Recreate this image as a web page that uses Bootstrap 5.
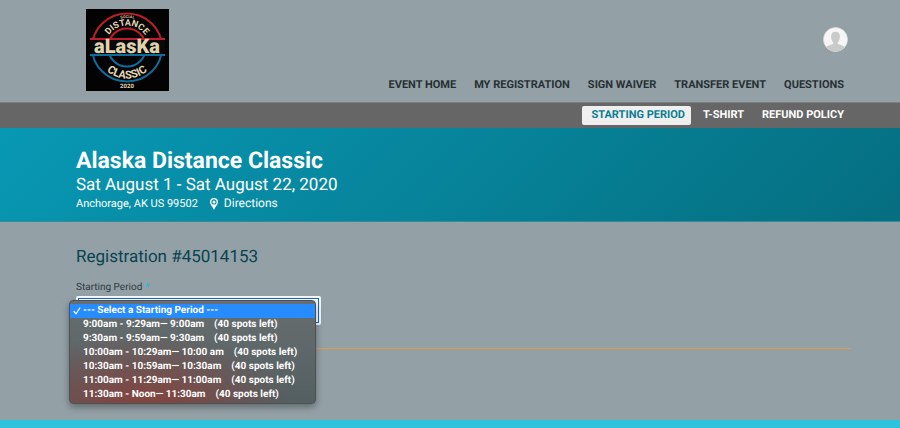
<!DOCTYPE html>
<html lang="en">
<head>
<meta charset="utf-8">
<meta name="viewport" content="width=device-width, initial-scale=1">
<title>Alaska Distance Classic</title>
<link href="https://cdn.jsdelivr.net/npm/bootstrap@5.3.0/dist/css/bootstrap.min.css" rel="stylesheet">
<style>
body { font-family: Roboto, "Liberation Sans", sans-serif; background: #93a0a6; color: #263033; text-rendering: geometricPrecision; }
a { color: inherit; text-decoration: none; }
.page-inner { padding-left: 76px; padding-right: 49px; }
.logo-link { margin: 9px 0 11px 10px; }
.logo-link svg, .avatar svg { display: block; }
.top-side { padding: 27px 3px 9px 0; }
.avatar { border-radius: 50%; }
.main-links, .sub-links { font-size: 11px; font-weight: 700; line-height: 16px; }
.main-links { column-gap: 18px; padding-right: 4px; }
.sub-bar { background: #666; border-top: 1px solid #7a7f82; color: #fff; }
.sub-links { padding: 3px 7px 3px 0; }
.sub-links a { padding: 1px 6px 2px 9px; border-radius: 2px; margin-right: 3px; }
.sub-links a:last-child { padding-right: 0; margin-right: 0; }
.sub-links .current { background: #efefef; color: #087c90; }
.hero { background: linear-gradient(135deg, #0898b4, #056e80); color: #fff; border-bottom: 1px solid #318c9b; padding-top: 18px; padding-bottom: 10px; }
.hero h1 { font-size: 23px; line-height: 29px; font-weight: 700; }
.hero-date { font-size: 17px; line-height: 21px; }
.hero-place { font-size: 11px; line-height: 15px; column-gap: 12px; }
.hero-place a { font-size: 12px; column-gap: 6px; }
.entry { padding-top: 24px; }
.entry h2 { font-size: 17px; line-height: 22px; font-weight: 400; color: #084350; margin-bottom: 14px; }
.entry label { font-size: 10px; line-height: 12px; color: #2f3b40; margin-bottom: 2px; }
.req { color: #20bfe0; font-weight: 700; }
.period-box { width: 245px; }
.period-box .form-select { height: 29px; border: 2px solid #f5f8fa; border-radius: 2px; box-shadow: inset 0 0 0 1px #1768c4; background-color: #fff; background-image: none; font-size: 10px; padding: 4px 8px; color: transparent; }
.period-menu { position: absolute; top: 4px; left: -7px; width: 247px; padding: 3px 0 1px; border: 1px solid #4c5254; border-radius: 4px; background: radial-gradient(ellipse 150px 75px at 30% 105%, #824641 15%, rgba(130, 70, 65, 0) 100%), linear-gradient(#686e70, #535f61); box-shadow: 0 3px 7px rgba(0, 0, 0, .35); z-index: 2; }
.period-menu button { display: block; width: 100%; height: 14px; line-height: 14px; font-size: 10px; font-weight: 700; padding: 0 0 0 13px; border: 0; background: none; color: #fff; text-align: left; white-space: pre; text-rendering: inherit; }
.period-menu .chosen { display: flex; align-items: center; background: #268cff; padding-left: 3px; column-gap: 2px; }
.rule { height: 1px; background: #e09a50; margin-top: 23px; }
.foot { height: 8px; background: #2fc2df; }
</style>
<script src="https://cdn.jsdelivr.net/npm/bootstrap@5.3.0/dist/js/bootstrap.bundle.min.js" defer></script>
</head>
<body class="d-flex flex-column min-vh-100">
<header>
  <div class="page-inner d-flex justify-content-between">
    <a class="logo-link" href="#" aria-label="Alaska Distance Classic">
      <svg width="83" height="82" viewBox="0 0 83 82" font-family="Roboto, sans-serif" font-weight="700" text-anchor="middle">
        <rect width="83" height="82" fill="#030303"/>
        <defs>
          <path id="arcTop" d="M19 38.500a22 22 0 0 1 44 0"/>
          <path id="arcBottom" d="M10 38.500a31 31 0 0 0 62 0"/>
          <path id="arcSocial" d="M12 38.500a29.500 29.500 0 0 1 59 0"/>
        </defs>
        <g fill="none" stroke-width="2">
          <path d="M6 38.500a35 34 0 0 1 70 0M22 38.500a19 19 0 0 1 38 0" stroke="#c01d2a"/>
          <path d="M6 38.500a35 34 0 0 0 70 0M22 38.500a19 19 0 0 0 38 0" stroke="#0d6d9d"/>
        </g>
        <g fill="#e2d7b4">
          <text font-size="9"><textPath href="#arcTop" startOffset="50%">DISTANCE</textPath></text>
          <text font-size="11"><textPath href="#arcBottom" startOffset="50%">CLASSIC</textPath></text>
          <text font-size="4"><textPath href="#arcSocial" startOffset="50%" fill="#c9be9c">SOCIAL</textPath></text>
          <text x="41" y="79" font-size="6">2020</text>
        </g>
        <path d="M4 29h75v9.500H4z" fill="#c01d2a"/>
        <path d="M4 38.500h75V47H4z" fill="#0d6d9d"/>
        <path d="M4 31h75v14H4z" fill="#080808"/>
        <text x="41" y="44" font-size="20" font-weight="900" fill="#dfd3ae">aLasKa</text>
      </svg>
    </a>
    <div class="top-side d-flex flex-column justify-content-between align-items-end">
      <a class="avatar" href="#" aria-label="Account">
        <svg width="25" height="25" viewBox="0 0 25 25">
          <defs><clipPath id="face"><circle cx="12.5" cy="12.5" r="12"/></clipPath></defs>
          <circle cx="12.5" cy="12.5" r="12" fill="#f6f6f6" stroke="#ddd" stroke-width=".7"/>
          <g clip-path="url(#face)" fill="#c9caca"><path d="M12.5 4.700c3.200 0 4.700 2.100 4.400 5.300-.2 2.400-1 4.400-2.200 5.500v1.200c1 1 6.300 1.500 8.600 4.700v4H1.700v-4c2.300-3.200 7.600-3.700 8.600-4.700v-1.200C9.100 14.400 8.300 12.400 8.100 10 7.800 6.800 9.300 4.700 12.500 4.700z"/></g>
        </svg>
      </a>
      <nav class="main-links d-flex flex-wrap" aria-label="Main">
        <a href="#">EVENT HOME</a>
        <a href="#">MY REGISTRATION</a>
        <a href="#">SIGN WAIVER</a>
        <a href="#">TRANSFER EVENT</a>
        <a href="#">QUESTIONS</a>
      </nav>
    </div>
  </div>
  <div class="sub-bar">
    <div class="page-inner">
      <nav class="sub-links d-flex justify-content-end" aria-label="Registration">
        <a class="current" href="#">STARTING PERIOD</a>
        <a href="#">T-SHIRT</a>
        <a href="#">REFUND POLICY</a>
      </nav>
    </div>
  </div>
</header>
<section class="hero page-inner">
  <h1 class="mb-0">Alaska Distance Classic</h1>
  <div class="hero-date">Sat August 1 - Sat August 22, 2020</div>
  <div class="hero-place d-flex align-items-center">
    <span>Anchorage, AK US 99502</span>
    <a class="d-flex align-items-center" href="#">
      <svg width="8" height="12" viewBox="0 0 8 12"><path fill="#fff" fill-rule="evenodd" d="M4 0a4 4 0 0 1 4 4c0 2.500-2.600 4.500-4 8C2.600 8.500 0 6.500 0 4a4 4 0 0 1 4-4zm0 1.300a2.600 2.600 0 1 0 0 5.200 2.600 2.600 0 0 0 0-5.200z"/><circle cx="4" cy="3.900" r="1.500" fill="#fff"/></svg>
      Directions
    </a>
  </div>
</section>
<main class="entry page-inner flex-grow-1">
  <h2>Registration #45014153</h2>
  <label class="d-block" for="period">Starting Period <span class="req">*</span></label>
  <div class="period-box position-relative">
    <select class="form-select" id="period">
      <option>--- Select a Starting Period ---</option>
    </select>
    <div class="period-menu" role="listbox" aria-label="Starting Period">
      <button type="button" role="option" aria-selected="true" class="chosen"><svg width="8" height="8" viewBox="0 0 8 8"><path d="M1 4.500l2 2.300L6.800 1" fill="none" stroke="#fff" stroke-width="1.200" stroke-linecap="round"/></svg><span>--- Select a Starting Period ---</span></button>
      <button type="button" role="option">9:00am - 9:29am— 9:00am&nbsp;&nbsp;&nbsp; (40 spots left)</button>
      <button type="button" role="option">9:30am - 9:59am— 9:30am&nbsp;&nbsp;&nbsp; (40 spots left)</button>
      <button type="button" role="option">10:00am - 10:29am— 10:00 am&nbsp;&nbsp;&nbsp; (40 spots left)</button>
      <button type="button" role="option">10:30am - 10:59am— 10:30am&nbsp;&nbsp;&nbsp; (40 spots left)</button>
      <button type="button" role="option">11:00am - 11:29am— 11:00am&nbsp;&nbsp;&nbsp; (40 spots left)</button>
      <button type="button" role="option">11:30am - Noon— 11:30am&nbsp;&nbsp;&nbsp; (40 spots left)</button>
    </div>
  </div>
  <div class="rule"></div>
</main>
<footer class="foot"></footer>
</body>
</html>
